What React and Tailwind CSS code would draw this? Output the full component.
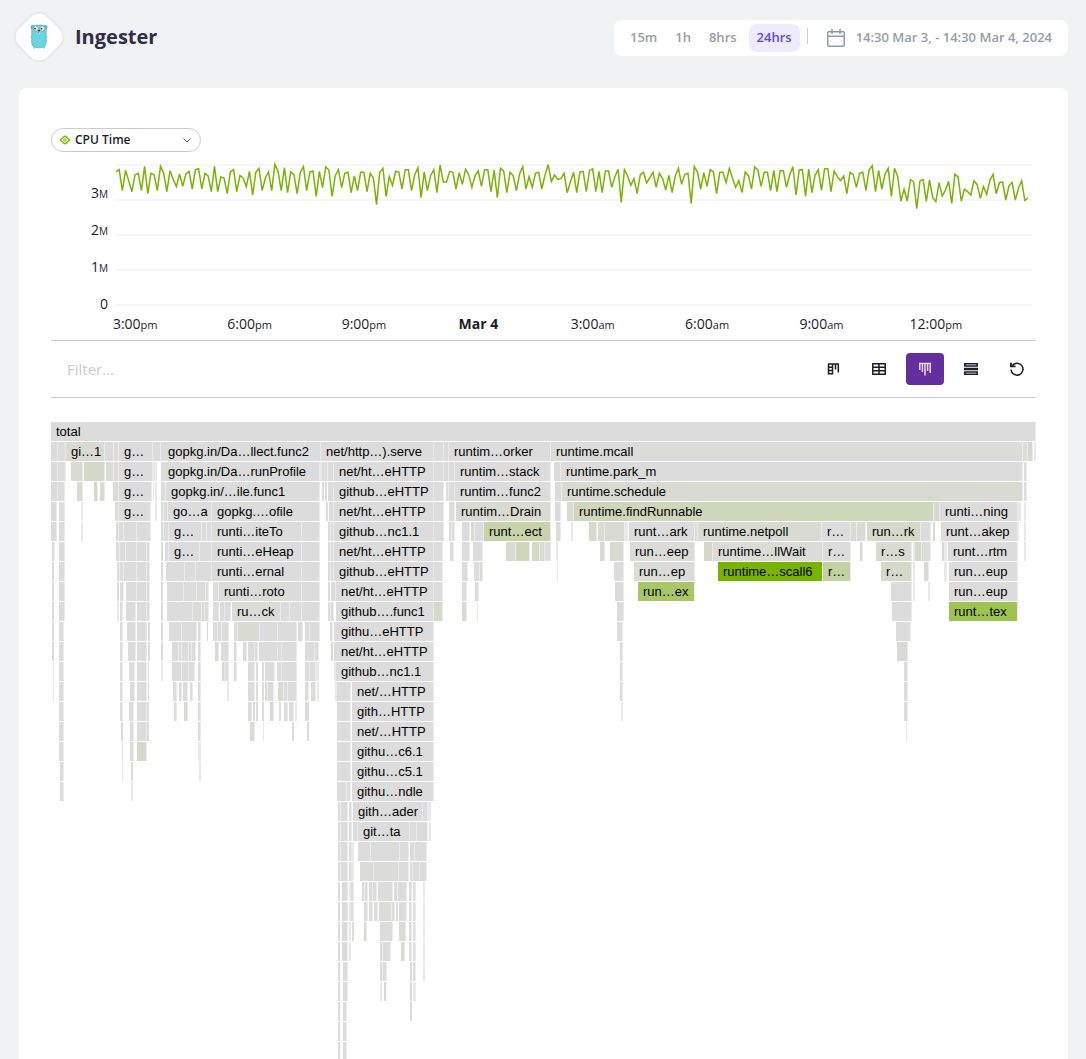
import { useState } from "react";

const FONT = "font-['Open_Sans','Noto_Sans',sans-serif]";

/* ---------- CPU time chart ---------- */

const SAMPLES = [
  66, 59, 122, 61, 92, 125, 74, 70, 122, 49, 131, 70, 74, 122, 49, 70, 125, 62, 88, 110, 72, 109, 72, 64, 117, 59, 56,
  117, 70, 78, 125, 49, 125, 81, 84, 131, 66, 59, 125, 77, 84, 110, 64, 135, 67, 55, 122, 84, 66, 122, 43, 64, 122, 53,
  128, 66, 74, 131, 67, 50, 122, 66, 63, 139, 64, 113, 51, 60, 139, 77, 59, 113, 70, 67, 128, 78, 122, 67, 67, 125, 70,
  84, 164, 67, 55, 139, 80, 106, 64, 67, 117, 59, 59, 122, 75, 53, 143, 66, 122, 77, 59, 128, 45, 96, 96, 64, 67, 117,
  68, 103, 58, 74, 112, 77, 63, 109, 59, 59, 125, 60, 143, 55, 63, 128, 67, 77, 122, 72, 50, 117, 80, 112, 70, 67, 117,
  75, 44, 94, 75, 88, 86, 70, 128, 95, 67, 128, 66, 64, 125, 62, 56, 125, 64, 128, 63, 63, 112, 80, 58, 157, 59, 77,
  106, 86, 131, 74, 67, 99, 83, 67, 112, 70, 86, 120, 76, 128, 78, 55, 103, 73, 70, 160, 50, 66, 117, 68, 109, 59, 66,
  131, 67, 67, 98, 55, 84, 112, 92, 128, 66, 77, 117, 51, 60, 109, 67, 67, 122, 61, 125, 62, 62, 112, 75, 50, 135, 60,
  59, 139, 57, 128, 75, 59, 121, 56, 56, 125, 63, 80, 92, 78, 131, 67, 74, 112, 70, 67, 121, 60, 47, 125, 61, 117, 73,
  55, 139, 55, 80, 154, 117, 153, 89, 95, 176, 93, 89, 154, 90, 142, 155, 98, 138, 121, 94, 160, 73, 81, 153, 118, 125,
  135, 92, 104, 145, 110, 133, 91, 73, 131, 98, 96, 150, 108, 97, 150, 115, 92, 151, 144,
];

const linePath = SAMPLES.map((v, i) => `${i ? "L" : "M"}${((i * 912) / 287).toFixed(2)} ${(v / 3 - 10).toFixed(2)}`).join("");

const TIMES = [
  ["3:00", "pm"],
  ["6:00", "pm"],
  ["9:00", "pm"],
  ["Mar 4", ""],
  ["3:00", "am"],
  ["6:00", "am"],
  ["9:00", "am"],
  ["12:00", "pm"],
];

function CpuChart() {
  return (
    <div className="mt-1 text-sm text-[#1c1b2e]">
      <div className="flex">
        <div className="flex w-[57px] shrink-0 flex-col items-end justify-between pt-[27px]">
          {["3", "2", "1"].map((n) => (
            <span key={n} className="h-[37px] leading-5">
              {n}
              <small className="text-[10px]">M</small>
            </span>
          ))}
          <span className="leading-5">0</span>
        </div>
        <svg
          className="ml-2 mr-1 mt-1 h-[150px] min-w-0 flex-1"
          viewBox="0 0 916 150"
          preserveAspectRatio="none"
          role="img"
          aria-label="CPU time over the last 24 hours"
        >
          <g stroke="#f6f6f7" strokeWidth="2">
            {[5, 40, 75, 110, 145].map((y) => (
              <path key={y} d={`M0 ${y}H916`} vectorEffect="non-scaling-stroke" />
            ))}
          </g>
          <path
            d={linePath}
            fill="none"
            stroke="#7ab205"
            strokeWidth="1.5"
            strokeLinejoin="miter"
            vectorEffect="non-scaling-stroke"
          />
        </svg>
      </div>
      <div className="ml-[27px] mr-[43px] grid grid-cols-8">
        {TIMES.map(([t, half], i) => (
          <span key={i} className={half ? "text-center leading-5" : "text-center font-bold leading-5"}>
            {t}
            <small className="text-[11px]">{half}</small>
          </span>
        ))}
      </div>
    </div>
  );
}

/* ---------- Flame graph ---------- */

const TONES = {
  "": "#dcdcdc",
  l: "#e9e9e9",
  a: "#dbdcd8",
  b: "#d9dbd2",
  c: "#d5d9c8",
  d: "#ced7b9",
  e: "#c7d4a9",
  m: "#c2d0a2",
  f: "#a9c766",
  h: "#9dc350",
  k: "#7ab200",
};

// One string per depth; each frame is start-end[:tone[:label]].
const ROWS = [
  "51-1036::total",
  "51-58 58-66 66-105:b:gi…1 105-114 114-119 119-153::g… 153-161 161-163 163-321::gopkg.in/Da…llect.func2 321-434::net/http…).serve 434-444 444-449 449-551::runtim…orker 551-1023:a:runtime.mcall 1023-1028 1028-1033:c 1034-1036:l",
  "51-58 58-66 71-83:b 84-105:c 106-114:a 114-119 119-153::g… 153-155:l 155-157:l 161-163 163-320::gopkg.in/Da…runProfile 320-322:l 322-328 328-334 334-434::net/ht…eHTTP 434-444 444-449 449-455 455-551::runtim…stack 554-561 561-1023::runtime.park_m 1024-1027",
  "51-58 58-65 77-83:b 94-98:c 100-105:b 113-119 119-152::g… 153-154:l 155-157:l 161-163 163-166 166-320::gopkg.in/…ile.func1 322-324 325-327 328-334 334-434::github…eHTTP 434-444 446-449 449-455 455-551::runtim…func2 555-562 562-1023:b:runtime.schedule 1024-1027",
  "51-57 59-65 81-83:l 115-119 119-151::g… 155-157:l 161-164 164-168 168-212::go…a 212-320::gopkg.…ofile 326-328 329-331 331-334 334-434::net/ht…eHTTP 434-444 449-451 451-455 456-551:b:runtim…Drain 555-561 567-574:b 574-934:d:runtime.findRunnable 934-936:b 936-940:c 940-1018::runti…ning 1018-1021:l 1024-1026:l",
  "51-57 59-65 81-83:l 116-119 119-124 124-137 137-151 161-164 164-169 169-202::g… 202-207 207-212 212-302::runti…iteTo 302-320 328-331 331-334 334-434::github…nc1.1 434-444 449-452 452-455 462-470 471-475:b 475-484 484-551:e:runt…ect 556-558 558-561 571-573:l 589-597:c 598-605:b 605-625:b 625-628:l 629-695::runt…ark 695-698:a 698-822:b:runtime.netpoll 822-851::r… 851-857:b 857-866:b 867-921:c:run…rk 921-931 933-935:b 941-1018::runt…akep 1018-1019:l 1024-1026:l",
  "52-55 59-65 116-120 120-126 126-137 137-147 147-150 161-163 165-169 169-200::g… 200-212 212-302::runti…eHeap 302-320 328-331 331-334 334-434::net/ht…eHTTP 434-443 450-454 462-470 473-483 506-516:b 516-530:d 532-540:c 540-545:b 545-551 556-558:l 600-605:b 610-624:b 630-695:a:run…eep 704-713:c 713-823:a:runtime…llWait 823-851::r… 860-863:b 876-912:b:r…s 913-915:l 915-922:c 922-931 942-944:b 944-947:l 948-1018::runt…rtm 1024-1026:l",
  "52-54 59-65 117-120 120-124 124-126 126-137 137-147 147-150 161-163 166-185 185-196 196-198 198-212 212-302::runti…ernal 302-320 328-331 331-334 334-434::github…eHTTP 434-443 462-468 474-480 480-483:b 557-558:l 614-624 634-695:a:run…ep 718-823:k:runtime…scall6 823-851:m:r… 881-912:c:r… 913-915:l 924-929:b 944-947:l 949-1018::run…eup",
  "52-54 59-65 117-119 120-124 126-137 137-147 147-150 161-163 167-184 184-197 197-206:a 206-209 213-219 219-302:a:runti…roto 302-320 328-330 331-333 333-336 336-434::net/ht…eHTTP 434-443 462-467 475-479 615-624 638-695:f:run…ex 891-912 913-915:l 928-930:l 949-1018::run…eup",
  "52-54 59-65 117-119:l 120-123 126-136 137-147 147-150 161-163 167-193 193-202 202-205:b 205-209 213-219 220-225 225-231 232-281:a:ru…ck 281-290 290-302 302-304 304-320 328-331 331-334 336-434::github….func1 434-443:c 462-467:b 477-478:l 617-624 892-912 949-1018:h:runt…tex",
  "52-54 59-64 120-123 127-136 137-147 148-150 161-163 169-182 182-197 198-201 207-208:b 213-218 218-222 222-229 234-238 238-260:b 260-278 278-297 298-303 305-310 310-320 330-333 334-336 336-434::githu…eHTTP 617-623 896-911",
  "52-54 59-64 120-123 128-136 137-147 148-150 161-163 172-179 179-182 182-189 189-192 192-196 198-201 215-219:b 221-229 234-237 243-247 248-255 255-258 259-278 278-282 282-297 305-315 315-319 331-333:b 334-336 336-434::net/ht…eHTTP 620-623 897-908:b",
  "53-54:l 59-64 120-123 129-135 137-147 148-149 161-163:l 172-182 182-189 189-195 198-201 222-225:b 225-229 234-237 248-255 256-258 262-264 265-275 277-282 282-297 305-310 310-316 317-319:l 316-317:l 334-336:l 336-434::github…nc1.1 620-623 904-908",
  "53-54:l 59-64 120-123 130-135 137-147 148-149 173-177 179-182 183-188 190-193 198-201 227-229:l 248-255 256-258 262-264 265-268 268-274:a 278-284:b 284-288 288-297 305-309 311-316:a 317-319:l 335-337:l 337-351 352-434::net/…HTTP 620-623 904-908",
  "59-64 120-123 129-134 137-147 147-149 174-177 184-188:b 198-201 248-252 253-255 256-258 262-264 270-274:b 279-281 284-288 289-294 295-297:l 305-307 307-309 337-351 352-434::gith…HTTP 621-623:l 904-908",
  "59-64 121-123 130-134 137-147 147-149 198-201 250-255:b 263-264:l 292-294 307-309 337-351 352-434::net/…HTTP 906-907:l",
  "59-64 122-123 130-134 137-147:c 198-201:l 337-351 352-434::githu…c6.1",
  "60-64 122-123:l 131-133 199-201:l 337-351 352-434::githu…c5.1",
  "60-64 131-133:l 337-347 347-351 352-434::githu…ndle",
  "338-341 341-348 349-352 353-423::gith…ader 423-428 428-431:l",
  "338-341 341-348 349-352 353-358 358-410::git…ta 410-417 417-428 429-431:l",
  "338-341 341-348 349-351 351-354:l 358-371 371-400 400-409 410-415 415-427",
  "338-341 341-348 349-351 351-354:l 360-374:a 374-399:a 399-409 410-413 413-420 420-427",
  "338-340 342-348 349-351:l 351-354 362-365 365-368 369-373 373-377 378-393 394-398 398-407 409-412 413-416 423-425:l",
  "338-340 342-348 349-351:l 351-354 364-368 369-373 374-378 379-392:a 392-395 396-398 399-407 409-412 413-416 423-425:l",
  "338-340 342-348 349-351:l 352-354 364-367:b 380-393 399-406:a 409-412 413-416 423-425:l",
  "338-340 342-348 349-351:l 380-383 383-391 401-405:b 409-412 413-416 423-425:l",
  "338-340 343-348 380-383 383-387 410-412 413-416 423-425:l",
  "338-340 343-348 380-382:l 384-386:b 410-412 413-416:l",
  "338-340 343-347 410-412",
  "338-340 343-347",
  "338-340 343-347",
].map((row) =>
  row.split(" ").map((frame) => {
    const [span, tone = "", label = ""] = frame.split(":");
    const [start, end] = span.split("-").map(Number);
    return { x: start - 51, w: end - start, tone, label };
  }),
);

const pct = (n) => `${(n / 985) * 100}%`;

function FlameGraph() {
  return (
    <svg className="mt-6 block h-[637px] w-full" role="img" aria-label="Flame graph" shapeRendering="crispEdges">
      {ROWS.map((frames, depth) => (
        <g key={depth}>
          {frames.map(({ x, w, tone, label }, i) => (
            <g key={i}>
              <rect x={pct(x)} y={depth * 20} width={pct(w)} height="19" fill="#ebebeb" />
              <rect x={pct(x)} y={depth * 20} width={pct(w > 2 ? w - 1 : w)} height="19" fill={TONES[tone]} />
              {label && (
                <text
                  x={pct(x)}
                  dx="5"
                  y={depth * 20 + 14}
                  fill="#000"
                  className="font-['Liberation_Sans',Arial,sans-serif] text-[13px]"
                >
                  {label}
                </text>
              )}
            </g>
          ))}
        </g>
      ))}
    </svg>
  );
}

/* ---------- Icons ---------- */

function Gopher() {
  return (
    <svg viewBox="0 0 18 26" className="h-[26px] w-[18px]" aria-hidden="true">
      <g fill="#e8cfae">
        <ellipse cx="1.6" cy="13" rx="1.4" ry="1" />
        <ellipse cx="16.4" cy="13" rx="1.4" ry="1" />
        <ellipse cx="4" cy="23.6" rx="1.1" ry="1.5" />
        <ellipse cx="14" cy="23.6" rx="1.1" ry="1.5" />
      </g>
      <circle cx="2.7" cy="3.2" r="1.7" fill="#5ccfdc" stroke="#33606a" strokeWidth=".5" />
      <circle cx="15.3" cy="3.2" r="1.7" fill="#5ccfdc" stroke="#33606a" strokeWidth=".5" />
      <path
        d="M9 1C4 1 1.800 2.600 1.700 6c-.1 3 .2 5 0 8-.1 3-.2 5 .5 7 .9 2.200 3.400 2.800 6.800 2.800s5.900-.6 6.800-2.800c.7-2 .6-4 .5-7-.2-3 .1-5 0-8C16.200 2.600 14 1 9 1z"
        fill="#68d5e3"
        stroke="#4b98a5"
        strokeWidth=".5"
      />
      <circle cx="5.800" cy="4.500" r="2.500" fill="#fff" stroke="#467580" strokeWidth=".5" />
      <circle cx="12.200" cy="4.500" r="2.500" fill="#fff" stroke="#467580" strokeWidth=".5" />
      <circle cx="5" cy="4.600" r=".9" fill="#111" />
      <circle cx="11.500" cy="4.600" r=".9" fill="#111" />
      <ellipse cx="9" cy="7.700" rx="1.700" ry="1" fill="#e8cfae" />
      <ellipse cx="9" cy="6.700" rx="1.200" ry=".8" fill="#222" />
      <rect x="8.300" y="8.300" width="1.400" height="1.400" fill="#fff" stroke="#777" strokeWidth=".3" />
    </svg>
  );
}

function CalendarIcon() {
  return (
    <svg viewBox="0 0 18 18" className="size-[18px]" fill="none" stroke="#8f99a8" strokeWidth="1.500" aria-hidden="true">
      <rect x=".75" y="2.750" width="16.500" height="14.500" rx="1" />
      <path d="M.75 7.250h16.500M5 0v5M13 0v5" />
    </svg>
  );
}

function CpuIcon() {
  return (
    <svg viewBox="0 0 12 12" className="h-3 w-3" fill="none" stroke="#7ab205" aria-hidden="true">
      <path d="M6 2 10.600 6 6 10 1.400 6z" strokeWidth="1.300" />
      <circle cx="6" cy="6" r="1.300" strokeWidth=".9" />
      <path d="M3.500 2.200l1 1M8.500 2.200l-1 1M3.500 9.800l1-1M8.500 9.800l-1-1M1.500 4l1.200.8M10.500 4l-1.200.8M1.500 8l1.200-.8M10.500 8l-1.200-.8" strokeWidth=".8" />
    </svg>
  );
}

const VIEWS = [
  {
    name: "Table and flame graph",
    icon: (
      <>
        <path d="M3 3h11M3 6.200h5M3 9.400h5M3 12.800h5M3.500 2.500v11M7.500 2.500v11" />
        <path d="M10.500 3v5.500M13.300 3v8.500" />
      </>
    ),
  },
  {
    name: "Table",
    icon: <path d="M1.800 2.800h12.400v10.400H1.800zM1.800 6.300h12.400M1.800 9.700h12.400M8 2.800v10.400" />,
  },
  {
    name: "Flame graph",
    icon: <path d="M2 2.500h12M2.800 2v7M5.400 2v9M8 2v12.500M10.600 2v8M13.200 2v10" />,
  },
  {
    name: "List",
    icon: (
      <>
        <path d="M1.800 2.700h12.400v2.200H1.800zM1.800 11.100h12.400v2.200H1.800z" />
        <path d="M1 8h14" strokeWidth="2.500" />
      </>
    ),
  },
  {
    name: "Reset",
    icon: (
      <>
        <path d="M3 4.800A6 6 0 1 1 2 8.600" />
        <path d="M2 1.800v3.500h4.500" strokeWidth="1.800" />
      </>
    ),
  },
];

/* ---------- Page ---------- */

const RANGES = ["15m", "1h", "8hrs", "24hrs"];

export default function App() {
  const [range, setRange] = useState("24hrs");
  const [view, setView] = useState("Flame graph");

  return (
    <div className={`min-h-screen bg-[#f1f2f4] pl-[19px] pr-[18px] ${FONT}`}>
      <header className="flex h-[88px] items-start justify-between">
        <div className="flex items-center gap-4 pt-4">
          <div className="grid size-10 rotate-45 place-items-center rounded-xl bg-white shadow-[0_0_4px_rgba(0,0,0,0.12)]">
            <div className="-rotate-45">
              <Gopher />
            </div>
          </div>
          <h1 className="pt-px text-xl font-bold leading-10 text-[#302d49]">Ingester</h1>
        </div>

        <div className="mt-5 flex h-9 items-center rounded-lg bg-white px-2 text-[13px] font-semibold text-[#949eab]">
          {RANGES.map((r) => (
            <button
              key={r}
              type="button"
              aria-pressed={range === r}
              onClick={() => setRange(r)}
              className={
                range === r
                  ? "ml-[2px] h-7 rounded-lg bg-[#efebff] px-2 text-[#6344f0]"
                  : "mr-[2px] h-7 rounded-lg px-2"
              }
            >
              {r}
            </button>
          ))}
          <span className="mb-1 ml-[7px] h-4 w-px bg-[#c9ced8]" />
          <button type="button" className="ml-[11px] flex h-7 items-center gap-[11px] px-2">
            <CalendarIcon />
            14:30 Mar 3, - 14:30 Mar 4, 2024
          </button>
        </div>
      </header>

      <main className="rounded-t-lg bg-white px-8 pt-10">
        <button
          type="button"
          aria-haspopup="listbox"
          className="flex h-6 w-[150px] items-center rounded-full border border-[#c5cae0] pl-[7px] pr-[9px] text-xs font-semibold text-[#1c1b2e]"
        >
          <CpuIcon />
          <span className="ml-1 flex-1 text-left">CPU Time</span>
          <svg viewBox="0 0 8 5" className="h-[5px] w-2" fill="none" stroke="#5c6270" aria-hidden="true">
            <path d="M.5.5 4 4 7.500.5" />
          </svg>
        </button>

        <CpuChart />

        <div className="mt-[5px] flex h-[58px] items-center border-y border-[#c5cad9]">
          <input
            type="text"
            aria-label="Filter"
            placeholder="Filter..."
            className="h-8 min-w-0 flex-1 bg-transparent px-4 text-[15px] text-[#1c1b2e] outline-none placeholder:text-[#c9cbcf]"
          />
          <div className="flex gap-2">
            {VIEWS.map(({ name, icon }) => (
              <button
                key={name}
                type="button"
                aria-label={name}
                onClick={() => name !== "Reset" && setView(name)}
                className={
                  view === name
                    ? "grid h-8 w-[38px] place-items-center rounded bg-[#632f9f] text-[#e6dbf5]"
                    : "grid h-8 w-[38px] place-items-center rounded text-[#1c1b2e]"
                }
              >
                <svg viewBox="0 0 16 16" className="size-4" fill="none" stroke="currentColor" strokeWidth="1.500" aria-hidden="true">
                  {icon}
                </svg>
              </button>
            ))}
          </div>
        </div>

        <FlameGraph />
      </main>
    </div>
  );
}
